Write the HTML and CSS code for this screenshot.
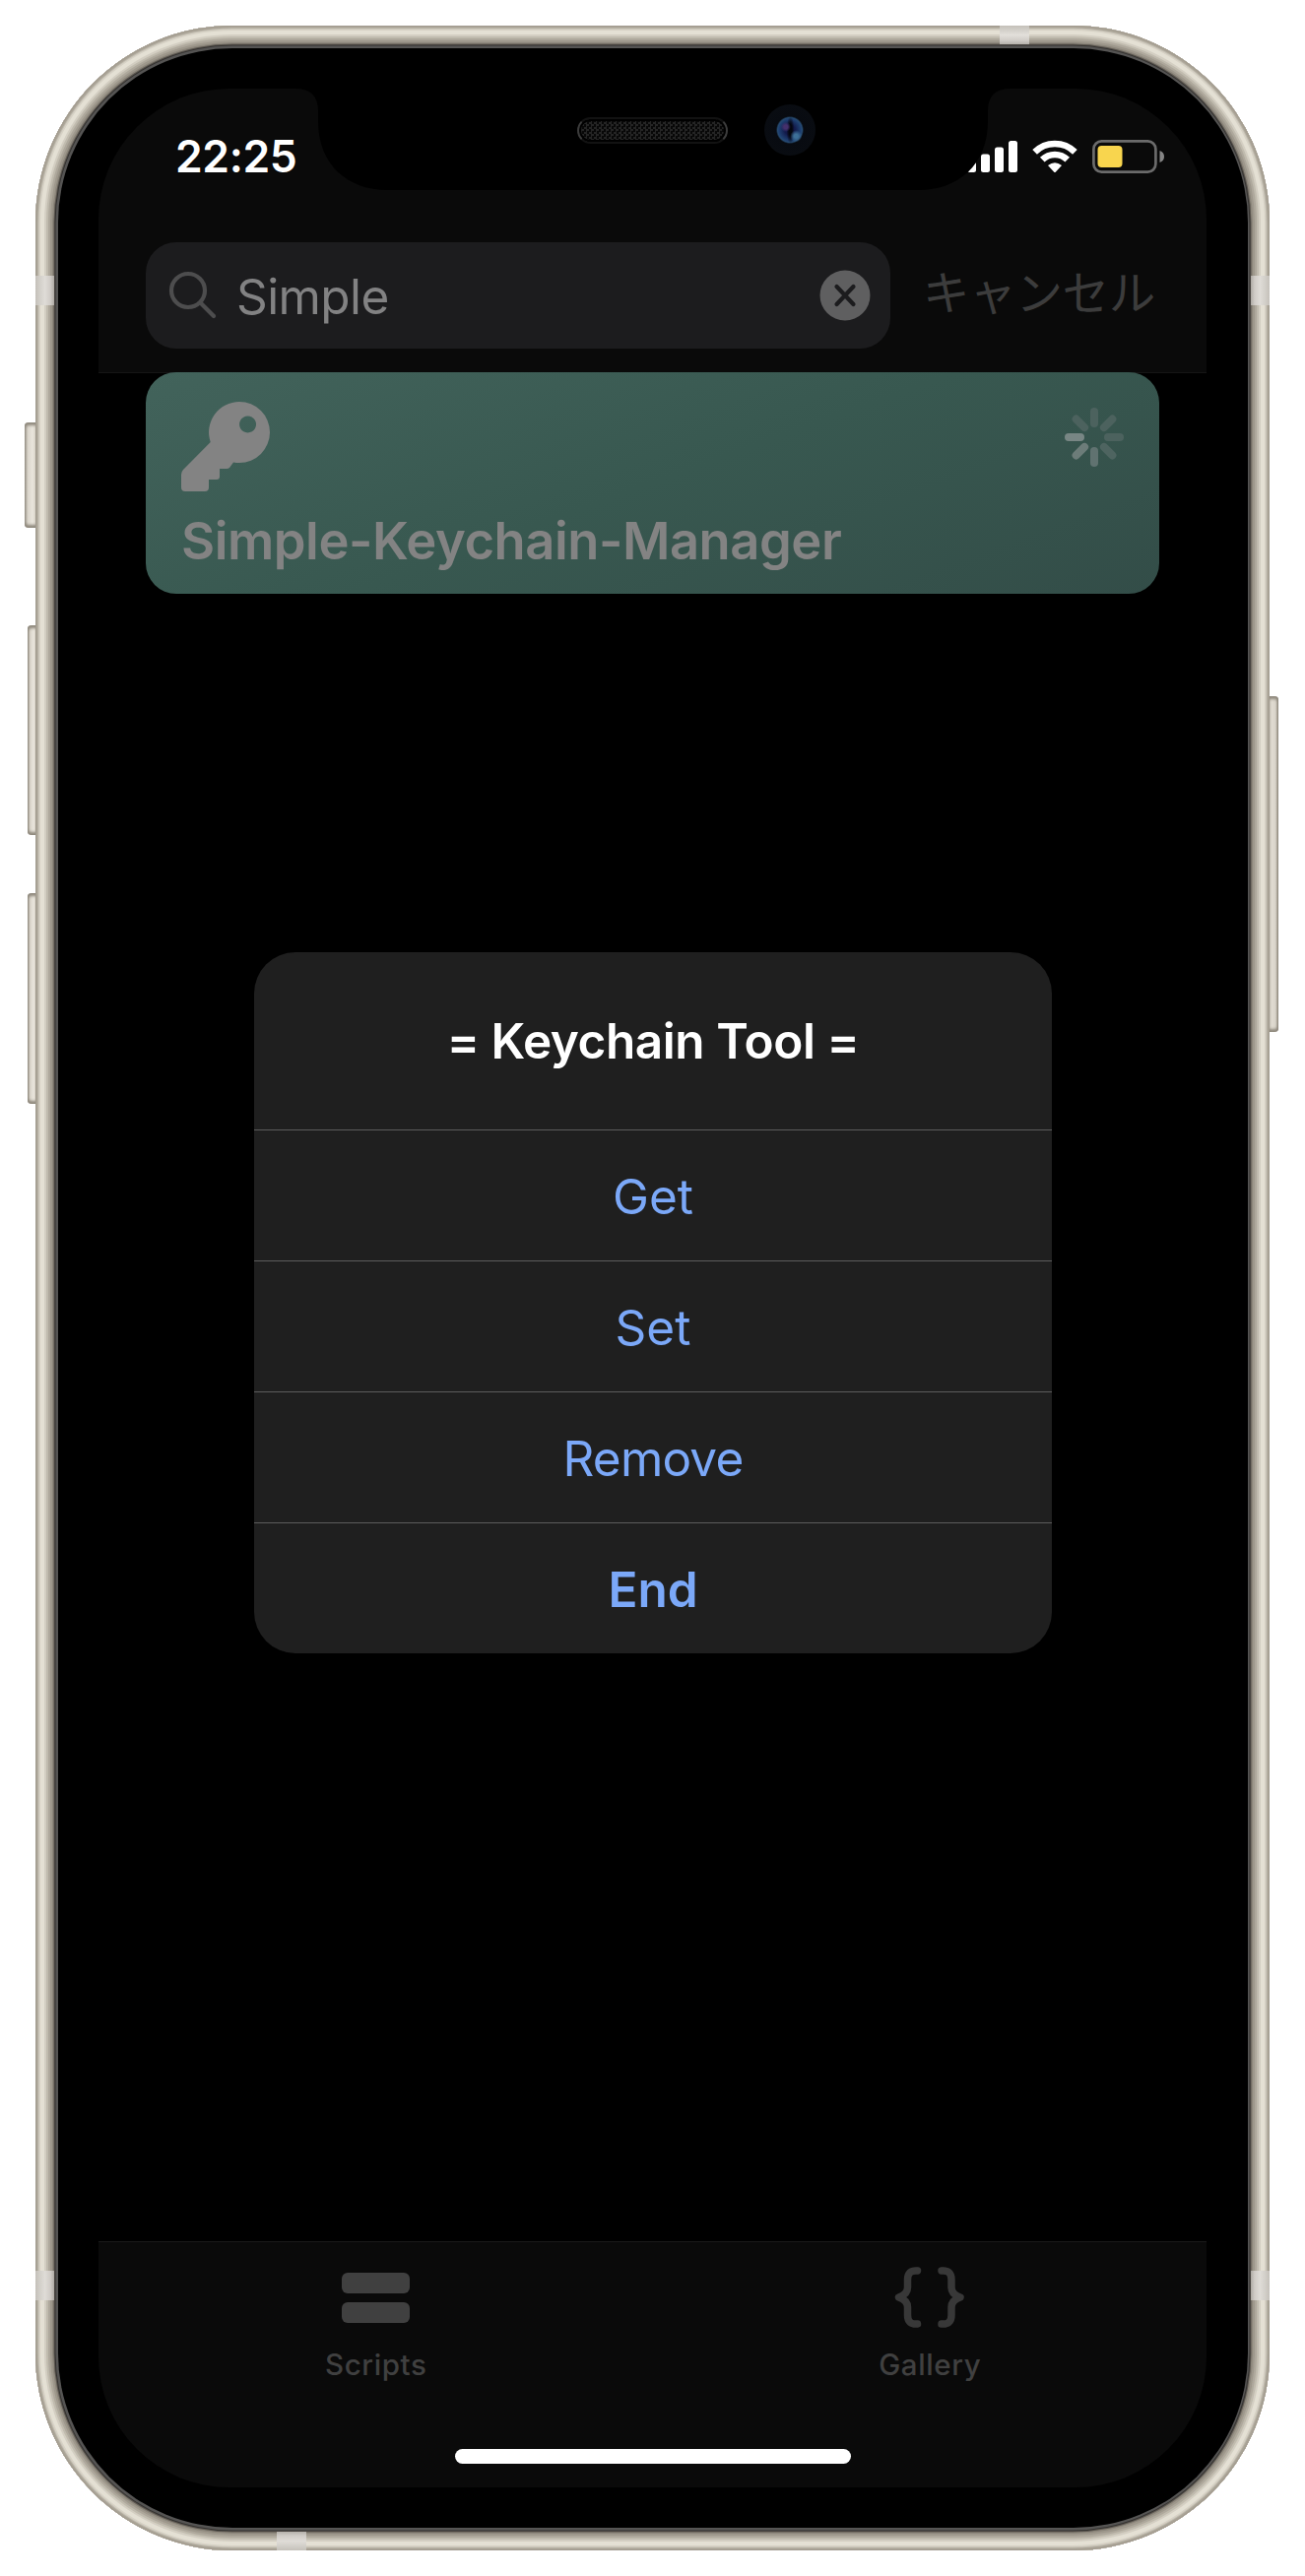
FILE: index.html
```html
<!DOCTYPE html>
<html lang="ja">
<head>
<meta charset="utf-8">
<title>Simple-Keychain-Manager</title>
<link rel="stylesheet" href="styles.css">
</head>
<body>
<div class="phone">
  <i class="key mute"></i><i class="key vol-up"></i><i class="key vol-down"></i><i class="key power"></i>
  <div class="frame">
    <div class="bezel">
      <main class="screen">
        <header class="top">
          <div class="status">
            <time class="clock">22:25</time>
            <div class="indicators">
              <svg class="signal" width="52" height="34" viewBox="0 0 52 34"><g fill="#fff"><rect x="0" y="20.5" width="9" height="12.5" rx="2.5"/><rect x="14" y="14.5" width="9" height="18.5" rx="2.5"/><rect x="28" y="7.5" width="9" height="25.5" rx="2.5"/><rect x="42" y="1" width="9" height="32" rx="2.5"/></g></svg>
              <svg class="wifi" width="46" height="34" viewBox="0 0 46 34"><g fill="none" stroke="#fff" stroke-width="6.600"><path d="M2.600 12.400a29 29 0 0 1 40.800 0"/><path d="M10.300 20.200a18 18 0 0 1 25.400 0"/></g><path fill="#fff" d="M16 26q7-5.500 14 0l-6 6.600q-1 1-2 0z"/></svg>
              <svg class="battery" width="76" height="36" viewBox="0 0 76 36"><rect x="2.400" y="2.400" width="63" height="31.200" rx="8" fill="none" stroke="#6b6b6b" stroke-width="2.700"/><rect x="6.500" y="7" width="25" height="22" rx="4" fill="#f8d54e"/><path d="M69.500 12q4.500 1.700 4.500 6t-4.500 6z" fill="#858585"/></svg>
            </div>
          </div>
          <div class="search-row">
            <div class="search">
              <svg width="50" height="50" viewBox="0 0 50 50"><g fill="none" stroke="#4d4d4e" stroke-width="4.200" stroke-linecap="round"><circle cx="20" cy="20" r="17"/><path d="M32.500 32.500L46 46"/></g></svg>
              <span class="query">Simple</span>
              <svg class="clear" width="52" height="52" viewBox="0 0 52 52"><circle cx="26" cy="26" r="25.500" fill="#5f5f60"/><path d="M17.500 17l17 18M34.500 17l-17 18" stroke="#1c1c1e" stroke-width="4.200" stroke-linecap="round"/></svg>
            </div>
            <span class="cancel">キャンセル</span>
          </div>
        </header>
        <section class="content">
          <article class="card">
            <div class="card-head">
              <svg width="90" height="91" viewBox="0 0 90 91"><path fill="#838383" fill-rule="evenodd" d="M59 0a31 31 0 0 1 0 62q-3 0-6-.5l-4 5.500q-1 1-3 1h-7v8q0 3-3 3h-8v8q0 4-4 4H4q-4 0-4-4V74q0-3 2-5l27.700-28A31 31 0 0 1 59 0zm8.500 14.500a8.500 8.500 0 1 0 .1 0z"/></svg>
              <svg class="spinner" width="62" height="62" viewBox="-31 -31 62 62"><g stroke-width="8" stroke-linecap="round"><path d="M0-26V-14" stroke="#4c625e"/><path d="M18.400-18.400L9.900-9.900" stroke="#4c625e"/><path d="M26 0H14" stroke="#4c625e"/><path d="M18.400 18.400L9.900 9.900" stroke="#4e6460"/><path d="M0 26V14" stroke="#607270"/><path d="M-18.400 18.400L-9.900 9.900" stroke="#6c7c79"/><path d="M-26 0H-14" stroke="#788684"/><path d="M-18.400-18.400L-9.900-9.900" stroke="#4c625e"/></g></svg>
            </div>
            <h1 class="card-title">Simple-Keychain-Manager</h1>
          </article>
        </section>
        <nav class="tabs">
          <div class="tab">
            <svg width="72" height="64" viewBox="0 0 72 64"><g fill="#404040"><rect x="2" y="7" width="69" height="21" rx="6"/><rect x="2" y="37" width="69" height="21" rx="6"/></g></svg>
            <span>Scripts</span>
          </div>
          <div class="tab">
            <svg width="72" height="64" viewBox="0 0 72 64"><g fill="none" stroke="#383838" stroke-width="7.500" stroke-linecap="round" stroke-linejoin="round"><path d="M23.500 5Q13.500 4 13.500 14v8q0 7-9 10 9 3 9 10v8q0 10 10 9"/><path d="M48 5Q58 4 58 14v8q0 7 9 10-9 3-9 10v8q0 10-10 9"/></g></svg>
            <span>Gallery</span>
          </div>
        </nav>
        <svg class="notch" width="726" height="104" viewBox="0 0 726 104"><path d="M0 0Q23 0 23 23V33C23 78 54 103 93 103H633C672 103 703 78 703 33V23Q703 0 726 0z"/></svg>
        <div class="home"></div>
        <div class="speaker"></div>
        <div class="camera"></div>
        <div class="dialog">
          <h2 class="dialog-title">= Keychain Tool =</h2>
          <div class="action">Get</div>
          <div class="action">Set</div>
          <div class="action remove">Remove</div>
          <div class="action strong">End</div>
        </div>
      </main>
    </div>
    <i class="band b1"></i><i class="band b2"></i><i class="band b3"></i><i class="band b4"></i><i class="band b5"></i><i class="band b6"></i>
  </div>
</div>
</body>
</html>
```
FILE: styles.css
```css
* { box-sizing: border-box; }
body { margin: 0; background: #fff; font-family: Inter, "Noto Sans CJK JP", sans-serif; }
h1, h2 { margin: 0; }
svg { display: block; flex: none; }

.phone { position: relative; width: 1325px; height: 2616px; padding: 26px 36px; }
.frame {
  position: relative; height: 2564px; padding: 23px 22px 23px 23px; border-radius: 200px;
  background: #555453;
  box-shadow:
    inset 0 0 0 1px #a29b8f, inset 0 0 0 2.5px #aba598, inset 0 0 0 3.5px #c2bdb1,
    inset 0 0 0 5px #d6d1c5, inset 0 0 0 9px #e4e0d4, inset 0 0 0 11px #d3cec2, inset 0 0 0 13px #c0bbae,
    inset 0 0 0 15px #aea89c, inset 0 0 0 17px #9e988c, inset 0 0 0 18.5px #8c867b,
    inset 0 0 0 19.5px #5c5750, inset 0 0 0 20.5px #343230;
}
.bezel { height: 2518px; padding: 41px 42px 40px 41px; border-radius: 177px; background: #000; }
.screen { position: relative; display: flex; flex-direction: column; width: 1125px; height: 2436px; border-radius: 133px; background: #000; overflow: hidden; }

.key { position: absolute; left: 28px; width: 10px; height: 213px; border-radius: 4px 0 0 4px; background: linear-gradient(90deg, #a8a297, #d9d4ca 25%, #e9e5dc 60%, #d5cfc4); box-shadow: inset 0 3px 3px #8f897d, inset 0 -3px 3px #8f897d; }
.mute { left: 25px; top: 429px; width: 13px; height: 107px; }
.vol-up { top: 635px; }
.vol-down { top: 907px; height: 214px; }
.power { left: 1287px; top: 707px; width: 11px; height: 341px; border-radius: 0 4px 4px 0; background: linear-gradient(270deg, #938d82, #d9d4ca 25%, #e0dbd1 60%, #b5afa4); }

.band { position: absolute; }
.b1, .b2, .b4, .b5 { width: 19px; height: 30px; }
.b1, .b4 { left: 0; background: linear-gradient(90deg, #c4c0b9, #d3d0ca 25%, #dfdcd7 50%, #cfcbc6 80%, #aeaaa4); }
.b2, .b5 { right: 0; background: linear-gradient(270deg, #c4c0b9, #d3d0ca 25%, #dfdcd7 50%, #cfcbc6 80%, #aeaaa4); }
.b1, .b2 { top: 254px; }
.b4, .b5 { top: 2280px; }
.b3, .b6 { width: 30px; height: 19px; }
.b3 { left: 979px; top: 0; background: linear-gradient(#c4c0b9, #d3d0ca 25%, #e2dfda 50%, #cfcbc6 80%, #b4b0aa); }
.b6 { left: 245px; bottom: 0; background: linear-gradient(0deg, #c4c0b9, #d3d0ca 25%, #dfdcd7 50%, #cfcbc6 80%, #b4b0aa); }

.top { height: 289px; background: #0a0a0a; border-bottom: 1px solid #161616; }
.status { display: flex; justify-content: space-between; align-items: center; height: 138px; padding: 0 41px 0 78px; }
.clock { font-size: 44.5px; font-weight: 600; line-height: 54px; letter-spacing: -.4px; color: #fff; }
.indicators { display: flex; align-items: center; }
.wifi { margin-left: 14px; }
.battery { margin-left: 14px; }
.search-row { display: flex; align-items: center; padding: 18px 0 0 48px; }
.search { display: flex; align-items: center; width: 756px; height: 108px; padding: 0 20px 0 23px; border-radius: 31px; background: #1c1c1e; }
.query { margin: 2px 0 0 19px; font-size: 49.5px; letter-spacing: -.6px; color: #828283; }
.clear { margin-left: auto; }
.cancel { margin: -10px 0 0 33px; font-family: "Noto Sans CJK JP", sans-serif; font-size: 47.5px; font-weight: 400; line-height: 60px; letter-spacing: -.3px; color: #3c3c3c; }

.content { flex: 1; padding: 0 48px; margin-top: -1px; }
.card { height: 225px; padding: 30px 35px 0 36px; border-radius: 31px; background: linear-gradient(160deg, #42635b, #385850 50%, #334d48); }
.card-head { display: flex; justify-content: space-between; }
.spinner { margin-top: 5px; }
.card-title { margin-top: 18px; font-size: 52.5px; font-weight: 600; line-height: 64px; letter-spacing: -.45px; white-space: nowrap; color: #838383; }

.tabs { display: grid; grid-template-columns: 1fr 1fr; height: 250px; padding-top: 24px; background: #0a0a0a; border-top: 1px solid #1a1a1a; }
.tab { display: flex; flex-direction: column; align-items: center; }
.tab span { margin: 18px 0 0 1px; font-size: 29.5px; font-weight: 500; line-height: 36px; letter-spacing: .6px; color: #404040; }

.notch { position: absolute; left: 200px; top: 0; }
.home { position: absolute; left: 362px; top: 2397px; width: 402px; height: 15px; border-radius: 8px; background: #fff; }
.speaker { position: absolute; left: 486px; top: 29px; width: 153px; height: 27px; border-radius: 14px; border: 2px solid #121212; border-left-color: #3c3c3c; border-right-color: #3c3c3c; background: repeating-conic-gradient(#242424 0 25%, #080808 0 50%) 0 0 / 5px 5px; box-shadow: inset 0 0 0 2px #000; }
.camera { position: absolute; left: 676px; top: 16px; width: 52px; height: 52px; border-radius: 50%; background: radial-gradient(circle at 62% 62%, #3d6f98 0 2px, transparent 6px), radial-gradient(circle at 42% 44%, #44306c 0 2px, transparent 5px), radial-gradient(ellipse 4px 14px at 51% 50%, #04060f 0 40%, transparent), radial-gradient(circle, #12194a 0 5px, #1e3f70 11px, #264a70 12.5px, #080b11 14px, #0a0d12); }

.dialog { position: absolute; left: 158px; top: 877px; width: 810px; height: 712px; border-radius: 42px; background: #1f1f1f; overflow: hidden; text-align: center; }
.dialog-title { height: 180px; font-size: 49.5px; font-weight: 600; line-height: 180px; letter-spacing: -.45px; color: #fff; }
.action { height: 133px; border-top: 1.5px solid #5c5c5c; font-size: 49.5px; line-height: 134px; color: #7ba8f8; }
.remove { letter-spacing: -.8px; }
.strong { font-weight: 600; }
```
